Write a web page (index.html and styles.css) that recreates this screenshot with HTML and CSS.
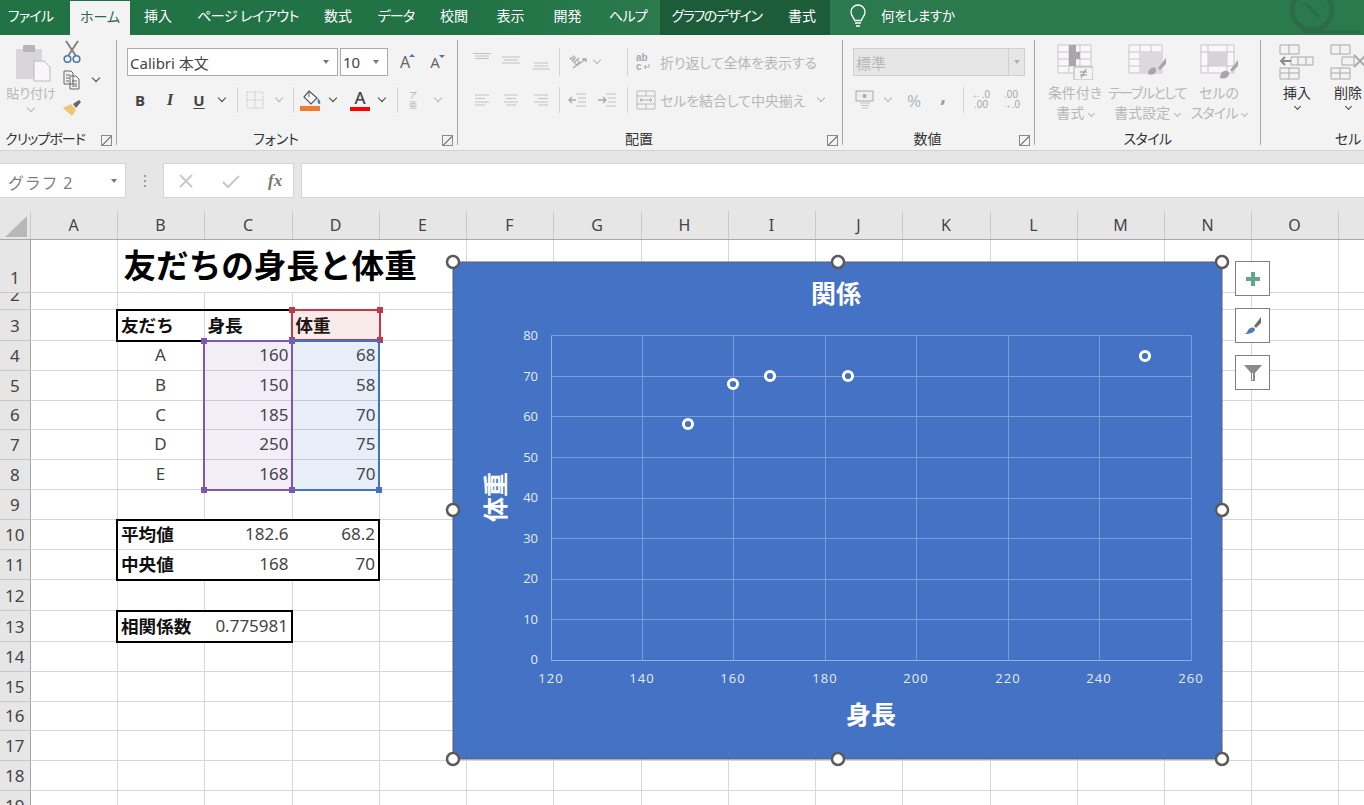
FILE: index.html
```html
<!DOCTYPE html>
<html lang="ja">
<head>
<meta charset="utf-8">
<title>友だちの身長と体重</title>
<link rel="stylesheet" href="styles.css">
</head>
<body>
<nav class="tabs">
  <div class="tab t-file">ファイル</div>
  <div class="tab t-home">ホーム</div>
  <div class="tab t-ins">挿入</div>
  <div class="tab t-page">ページ レイアウト</div>
  <div class="tab t-ins">数式</div>
  <div class="tab t-data">データ</div>
  <div class="tab t-ins">校閲</div>
  <div class="tab t-view">表示</div>
  <div class="tab t-view">開発</div>
  <div class="tab t-help">ヘルプ</div>
  <div class="ctx">
    <div class="tab t-design">グラフのデザイン</div>
    <div class="tab t-fmt">書式</div>
  </div>
  <svg class="bulb" width="18" height="24" viewBox="0 0 18 24"><path d="M5.5 16.5C5.2 13.5 2 12 2 8a7 7 0 0 1 14 0c0 4-3.200 5.500-3.500 8.500z" fill="none" stroke="#fff" stroke-width="1.300"/><path d="M6 19h6M7 22h4" stroke="#fff" stroke-width="1.500"/></svg>
  <div class="tell">何をしますか</div>
  <svg class="mark" width="110" height="35" viewBox="0 0 110 35"><circle cx="62" cy="10" r="20" fill="none" stroke="#2c6a48" stroke-width="5"/><path d="M55 3l14 14M52 32h58" stroke="#2c6a48" stroke-width="3" fill="none"/></svg>
</nav>

<section class="ribbon">
  <div class="group g-clip">
    <div class="body clip-body">
      <div class="paste">
        <svg width="36" height="38" viewBox="0 0 36 38"><rect x="1" y="5" width="26" height="30" fill="#d9d5d9"/><rect x="8" y="1" width="12" height="7" rx="1" fill="#b8b4b8"/><path d="M19 17h10l6 6v14H19z" fill="#f8f6f8" stroke="#bdbabd"/></svg>
        <div class="dis big-t">貼り付け</div>
        <span class="chev dis"></span>
      </div>
      <div class="clip-tools">
        <svg width="18" height="24" viewBox="0 0 18 24"><path d="M3 1l10 15M15 1L5 16" stroke="#7d7d7d" stroke-width="1.800" fill="none"/><circle cx="4.500" cy="19" r="3.300" fill="none" stroke="#4a79ad" stroke-width="1.600"/><circle cx="13.500" cy="19" r="3.300" fill="none" stroke="#4a79ad" stroke-width="1.600"/></svg>
        <span></span>
        <svg width="18" height="20" viewBox="0 0 18 20"><path d="M1 1h7l2 2v11H1zM7 6h6l3 3v10H7z" fill="#f3f3f3" stroke="#666"/><path d="M3 5h4M3 8h3M3 11h3M9 11h5M9 14h5M9 16h5" stroke="#666"/></svg>
        <span class="chev dark"></span>
        <svg width="20" height="18" viewBox="0 0 20 18"><path d="M1 9l8-4 5 6-4 6z" fill="#f0c671"/><path d="M11 5l6-4 2 2-5 6z" fill="#666"/></svg>
        <span></span>
      </div>
    </div>
    <div class="foot"><span class="lbl lbl-clip">クリップボード</span><span class="launch"></span></div>
  </div>

  <div class="group g-font">
    <div class="body rows">
      <div class="row1">
        <div class="combo c-font"><span class="combo-t">Calibri 本文</span><span class="tri"></span></div>
        <div class="combo c-size"><span class="combo-t">10</span><span class="tri"></span></div>
        <div class="grow-a">A<sup class="up"></sup></div>
        <div class="grow-a small-a">A<sup class="dn"></sup></div>
      </div>
      <div class="row2 font-row">
        <b class="fb">B</b>
        <b class="fb fi">I</b>
        <b class="fb fu">U</b>
        <span class="chev dark"></span>
        <span class="sep"></span>
        <svg width="18" height="18" viewBox="0 0 18 18"><path d="M1 1h16v16H1zM9 1v16M1 9h16" fill="none" stroke="#c4c4c4" stroke-dasharray="1.500 1"/></svg>
        <span class="chev dis"></span>
        <span class="sep"></span>
        <svg width="22" height="22" viewBox="0 0 22 22"><path d="M9 2l8 7-6 6-7-7z" fill="#fff" stroke="#555" stroke-width="1.200"/><path d="M9 2v6" stroke="#555"/><path d="M18 9c2 3 3 4 2 6-2 0-3-2-2-6z" fill="#3f78c0"/><rect x="0" y="17" width="20" height="5" fill="#ed7d31"/></svg>
        <span class="chev dark"></span>
        <i></i>
        <span class="color-a">A</span>
        <span class="chev dark"></span>
        <i></i>
        <span class="sep"></span>
        <span class="dis zh">ア<br>亜</span>
        <span class="chev dis"></span>
      </div>
    </div>
    <div class="foot"><span class="lbl">フォント</span><span class="launch"></span></div>
  </div>

  <div class="group g-align">
    <div class="body rows">
      <div class="row2 align-a">
        <svg width="18" height="28" viewBox="0 0 18 28"><path d="M0 5.500h18M2 8h14M2 10.500h14" stroke="#c2c2c2"/></svg>
        <svg width="18" height="28" viewBox="0 0 18 28"><path d="M0 9h18M2 12h14M0 15h18" stroke="#c2c2c2"/></svg>
        <svg width="18" height="28" viewBox="0 0 18 28"><path d="M2 15h14M2 18h14M0 21h18" stroke="#c2c2c2"/></svg>
        <span class="sep tall"></span>
        <i></i>
        <svg class="orient" width="22" height="20" viewBox="0 0 22 20"><text x="1" y="12" class="ab-t" transform="rotate(45 8 9)">ab</text><path d="M5 16L18 7m-4 0h4v3" fill="none" stroke="#aaa" stroke-width="1.400"/></svg>
        <span class="chev dis"></span>
        <i></i>
        <span class="sep tall"></span>
        <svg width="16" height="18" viewBox="0 0 16 18"><text x="1" y="8" class="ab-t">ab</text><text x="1" y="17" class="ab-t">c</text><path d="M14 11v3H9m2-2l-2 2 2 2" fill="none" stroke="#aaa"/></svg>
        <i></i>
        <span class="dis rib-t">折り返して全体を表示する</span>
      </div>
      <div class="row2 align-b">
        <svg width="14" height="12" viewBox="0 0 14 12"><path d="M0 1h14M0 4.500h10M0 8h14M0 11h10" stroke="#c2c2c2"/></svg>
        <svg width="14" height="12" viewBox="0 0 14 12"><path d="M0 1h14M2 4.500h10M0 8h14M2 11h10" stroke="#c2c2c2"/></svg>
        <svg width="14" height="12" viewBox="0 0 14 12"><path d="M0 1h14M4 4.500h10M0 8h14M4 11h10" stroke="#c2c2c2"/></svg>
        <span class="sep"></span>
        <svg width="18" height="14" viewBox="0 0 18 14"><path d="M8 1h10M10 5h8M10 9h8M8 13h10" stroke="#c2c2c2"/><path d="M8 7H1m3-3L1 7l3 3" fill="none" stroke="#aaa" stroke-width="1.400"/></svg>
        <svg width="18" height="14" viewBox="0 0 18 14"><path d="M8 1h10M10 5h8M10 9h8M8 13h10" stroke="#c2c2c2"/><path d="M0 7h7M5 4l3 3-3 3" fill="none" stroke="#aaa" stroke-width="1.400"/></svg>
        <i></i>
        <span class="sep"></span>
        <i></i>
        <svg width="20" height="20" viewBox="0 0 20 20"><path d="M1 1h18v18H1zM1 6h18M1 14h18M10 1v5M10 14v5" fill="none" stroke="#bbb"/><path d="M4 10h12M6 8l-2 2 2 2M14 8l2 2-2 2" fill="none" stroke="#aaa"/></svg>
        <i></i>
        <span class="dis rib-t">セルを結合して中央揃え</span>
        <span class="chev dis"></span>
      </div>
    </div>
    <div class="foot"><span class="lbl">配置</span><span class="launch"></span></div>
  </div>

  <div class="group g-num">
    <div class="body rows">
      <div class="combo c-num"><span class="combo-t dis">標準</span><span class="num-drop"><span class="tri"></span></span></div>
      <div class="row2 num-row">
        <svg width="20" height="20" viewBox="0 0 20 20"><rect x="1" y="1" width="17" height="10" fill="#eee" stroke="#aaa"/><circle cx="9.500" cy="6" r="2" fill="#aaa"/><path d="M5 13h10M6 15.500h8M7 18h6" stroke="#c4c4c4"/></svg>
        <span class="chev dis"></span>
        <span class="dis pct">%</span>
        <b class="dis comma">,</b>
        <i></i>
        <span class="sep"></span>
        <span class="dec"><span>←.0</span><span>.00</span></span>
        <span class="dec"><span>.00</span><span>→.0</span></span>
      </div>
    </div>
    <div class="foot"><span class="lbl">数値</span><span class="launch"></span></div>
  </div>

  <div class="group g-style">
    <div class="body styles">
      <div class="big">
        <svg width="36" height="36" viewBox="0 0 36 36"><path d="M1 1h33v28H1zM1 8h33M1 15h33M1 22h33M12 1v28M23 1v28" fill="#f8f8f8" stroke="#c9c5c9"/><path d="M12 1h7v7h4v7h-4v7h-7z" fill="#a9a6a9"/><rect x="17" y="23" width="19" height="13" fill="#f3f3f3" stroke="#b5b2b5"/><path d="M23 28h7M23 31h7M29 25l-5 9" stroke="#8c8c8c"/></svg>
        <div class="dis big-l">条件付き<br>書式 <span class="chev dis"></span></div>
      </div>
      <div class="big">
        <svg width="38" height="36" viewBox="0 0 38 36"><path d="M1 1h33v28H1zM1 8h33M1 15h33M1 22h33M12 1v28M23 1v28" fill="#f8f8f8" stroke="#c9c5c9"/><rect x="12" y="8" width="22" height="21" fill="#dcd9dc"/><path d="M20 30c0-6 6-8 8-5 1 4-3 7-8 5z" fill="#a9a6a9"/><path d="M30 24l8-10v6l-6 6z" fill="#a9a6a9"/></svg>
        <div class="dis big-l"><span class="tight">テーブルとして</span><br>書式設定 <span class="chev dis"></span></div>
      </div>
      <div class="big">
        <svg width="38" height="36" viewBox="0 0 38 36"><path d="M1 1h33v28H1zM8 1v28M27 1v28M1 8h33M1 22h33" fill="#f8f8f8" stroke="#c9c5c9"/><rect x="8" y="8" width="19" height="14" fill="#d6d3d6"/><path d="M20 34c0-7 6-9 9-6 1 4-3 8-9 6z" fill="#a9a6a9"/><path d="M30 26l8-10v6l-6 6z" fill="#a9a6a9"/></svg>
        <div class="dis big-l">セルの<br><span class="tight2">スタイル</span> <span class="chev dis"></span></div>
      </div>
    </div>
    <div class="foot foot-plain"><span class="lbl lbl-kana">スタイル</span></div>
  </div>

  <div class="group g-cell">
    <div class="body cells">
      <div class="big">
        <svg width="36" height="36" viewBox="0 0 36 36"><path d="M1 1h19v9H1zM10 1v9M1 24h19v11H1zM1 29h19M10 24v11M12 13h22v8H12zM19 13v8M27 13v8" fill="#f3f3f3" stroke="#aaa8aa"/><path d="M12 17H2m4-4l-4 4 4 4" fill="none" stroke="#8a8a8a" stroke-width="2"/></svg>
        <div class="cell-l">挿入</div>
        <span class="chev dark"></span>
      </div>
      <div class="big">
        <svg width="36" height="36" viewBox="0 0 36 36"><path d="M1 1h19v9H1zM10 1v9M1 24h19v11H1zM1 29h19M10 24v11M12 13h12v8H12z" fill="#f3f3f3" stroke="#aaa8aa"/><path d="M24 11l12 12M36 11L24 23" stroke="#aaa" stroke-width="2"/></svg>
        <div class="cell-l">削除</div>
        <span class="chev dark"></span>
      </div>
    </div>
    <div class="foot foot-plain foot-cell"><span class="lbl">セル</span></div>
  </div>
</section>

<section class="fbar">
  <div class="namebox"><span class="name">グラフ 2</span><span class="tri"></span></div>
  <div class="dots"><span></span><span></span><span></span></div>
  <div class="fn">
    <svg width="16" height="16" viewBox="0 0 16 16"><path d="M2 2l12 12M14 2L2 14" stroke="#c8c8c8" stroke-width="1.800"/></svg>
    <svg width="18" height="16" viewBox="0 0 18 16"><path d="M1 9l5 5L17 3" fill="none" stroke="#c8c8c8" stroke-width="2"/></svg>
    <span class="fx">fx</span>
  </div>
  <div class="formula"></div>
</section>

<main class="sheet">
  <table class="grid">
    <colgroup><col class="c30"><col class="c87"><col class="c87"><col class="c88"><col class="c87"><col class="c87"><col class="c87"><col class="c88"><col class="c87"><col class="c87"><col class="c87"><col class="c88"><col class="c87"><col class="c87"><col class="c87"><col class="c87"><col class="c87"></colgroup>
    <thead>
      <tr class="hdr"><th class="corner"><svg width="22" height="21" viewBox="0 0 22 21"><path d="M22 0v21H0z" fill="#b8b8b8"/></svg></th><th>A</th><th>B</th><th>C</th><th>D</th><th>E</th><th>F</th><th>G</th><th>H</th><th>I</th><th>J</th><th>K</th><th>L</th><th>M</th><th>N</th><th>O</th><th></th></tr>
    </thead>
    <tbody>
      <tr class="h53"><th>1</th><td></td><td colspan="4" class="title">友だちの身長と体重</td><td></td><td></td><td></td><td></td><td></td><td></td><td></td><td></td><td></td><td></td></tr>
      <tr class="h17"><th><div class="clip">2</div></th><td></td><td></td><td></td><td></td><td></td><td></td><td></td><td></td><td></td><td></td><td></td><td></td><td></td><td></td><td></td><td></td></tr>
      <tr class="h31"><th>3</th><td></td><td class="hd bt bb bl">友だち</td><td class="hd bt">身長</td><td class="hd">体重</td><td></td><td></td><td></td><td></td><td></td><td></td><td></td><td></td><td></td><td></td><td></td><td></td></tr>
      <tr class="h30"><th>4</th><td></td><td class="ctr">A</td><td class="num">160</td><td class="num">68</td><td></td><td></td><td></td><td></td><td></td><td></td><td></td><td></td><td></td><td></td><td></td><td></td></tr>
      <tr class="h30"><th>5</th><td></td><td class="ctr">B</td><td class="num">150</td><td class="num">58</td><td></td><td></td><td></td><td></td><td></td><td></td><td></td><td></td><td></td><td></td><td></td><td></td></tr>
      <tr class="h29"><th>6</th><td></td><td class="ctr">C</td><td class="num">185</td><td class="num">70</td><td></td><td></td><td></td><td></td><td></td><td></td><td></td><td></td><td></td><td></td><td></td><td></td></tr>
      <tr class="h30"><th>7</th><td></td><td class="ctr">D</td><td class="num">250</td><td class="num">75</td><td></td><td></td><td></td><td></td><td></td><td></td><td></td><td></td><td></td><td></td><td></td><td></td></tr>
      <tr class="h30"><th>8</th><td></td><td class="ctr">E</td><td class="num">168</td><td class="num">70</td><td></td><td></td><td></td><td></td><td></td><td></td><td></td><td></td><td></td><td></td><td></td><td></td></tr>
      <tr class="h30"><th>9</th><td></td><td></td><td></td><td></td><td></td><td></td><td></td><td></td><td></td><td></td><td></td><td></td><td></td><td></td><td></td><td></td></tr>
      <tr class="h30"><th>10</th><td></td><td class="hd bt bl nr">平均値</td><td class="num bt nr">182.6</td><td class="num bt br">68.2</td><td></td><td></td><td></td><td></td><td></td><td></td><td></td><td></td><td></td><td></td><td></td><td></td></tr>
      <tr class="h30"><th>11</th><td></td><td class="hd bb bl nr">中央値</td><td class="num bb nr">168</td><td class="num bb br">70</td><td></td><td></td><td></td><td></td><td></td><td></td><td></td><td></td><td></td><td></td><td></td><td></td></tr>
      <tr class="h31"><th>12</th><td></td><td></td><td></td><td></td><td></td><td></td><td></td><td></td><td></td><td></td><td></td><td></td><td></td><td></td><td></td><td></td></tr>
      <tr class="h31"><th>13</th><td></td><td class="hd bt bb bl nr">相関係数</td><td class="num bt bb br">0.775981</td><td></td><td></td><td></td><td></td><td></td><td></td><td></td><td></td><td></td><td></td><td></td><td></td><td></td></tr>
      <tr class="h30"><th>14</th><td></td><td></td><td></td><td></td><td></td><td></td><td></td><td></td><td></td><td></td><td></td><td></td><td></td><td></td><td></td><td></td></tr>
      <tr class="h30"><th>15</th><td></td><td></td><td></td><td></td><td></td><td></td><td></td><td></td><td></td><td></td><td></td><td></td><td></td><td></td><td></td><td></td></tr>
      <tr class="h29"><th>16</th><td></td><td></td><td></td><td></td><td></td><td></td><td></td><td></td><td></td><td></td><td></td><td></td><td></td><td></td><td></td><td></td></tr>
      <tr class="h30"><th>17</th><td></td><td></td><td></td><td></td><td></td><td></td><td></td><td></td><td></td><td></td><td></td><td></td><td></td><td></td><td></td><td></td></tr>
      <tr class="h30"><th>18</th><td></td><td></td><td></td><td></td><td></td><td></td><td></td><td></td><td></td><td></td><td></td><td></td><td></td><td></td><td></td><td></td></tr>
      <tr class="h30"><th>19</th><td></td><td></td><td></td><td></td><td></td><td></td><td></td><td></td><td></td><td></td><td></td><td></td><td></td><td></td><td></td><td></td></tr>
    </tbody>
  </table>

  <div class="range r-red"><s class="tl"></s><s class="tr"></s><s class="bl2"></s><s class="br2"></s></div>
  <div class="range r-pur"><s class="tl"></s><s class="tr"></s><s class="bl2"></s><s class="br2"></s></div>
  <div class="range r-blu"><s class="br2"></s></div>

  <figure class="chart">
    <svg class="chart-svg" width="769" height="497" viewBox="453 262 769 497">
      <rect x="453" y="262" width="769" height="497" fill="#4472c4" stroke="#5a5f6b"/>
      <g class="gl" transform="translate(.5 .5)">
        <path d="M551 335h640M551 376h640M551 416h640M551 457h640M551 498h640M551 538h640M551 579h640M551 619h640"/>
        <path d="M642 335v325M733 335v325M825 335v325M916 335v325M1008 335v325M1099 335v325M1191 335v325"/>
        <path class="axis" d="M551 335v325h640"/>
      </g>
      <g class="ylab">
        <text x="538" y="340">80</text><text x="538" y="381">70</text><text x="538" y="421">60</text><text x="538" y="462">50</text><text x="538" y="502">40</text><text x="538" y="543">30</text><text x="538" y="583">20</text><text x="538" y="624">10</text><text x="538" y="664">0</text>
      </g>
      <g class="xlab">
        <text x="551" y="683">120</text><text x="642" y="683">140</text><text x="733" y="683">160</text><text x="825" y="683">180</text><text x="916" y="683">200</text><text x="1008" y="683">220</text><text x="1099" y="683">240</text><text x="1191" y="683">260</text>
      </g>
      <text class="ct" x="836" y="303">関係</text>
      <text class="ct" x="871" y="724">身長</text>
      <text class="ct" transform="translate(505 497) rotate(-90)">体重</text>
      <g class="pts">
        <circle cx="733" cy="384" r="4.600"/><circle cx="688" cy="424" r="4.600"/><circle cx="848" cy="376" r="4.600"/><circle cx="1145" cy="356" r="4.600"/><circle cx="770" cy="376" r="4.600"/>
      </g>
      <g class="hnd">
        <circle cx="453" cy="262" r="6"/><circle cx="838" cy="262" r="6"/><circle cx="1222" cy="262" r="6"/><circle cx="453" cy="510" r="6"/><circle cx="1222" cy="510" r="6"/><circle cx="453" cy="759" r="6"/><circle cx="838" cy="759" r="6"/><circle cx="1222" cy="759" r="6"/>
      </g>
    </svg>
  </figure>

  <div class="side">
    <div class="side-b"><svg width="16" height="16" viewBox="0 0 16 16"><path d="M6 1h4v5h5v4h-5v5H6v-5H1V6h5z" fill="#66a78a"/></svg></div>
    <div class="side-b"><svg width="20" height="20" viewBox="0 0 20 20"><path d="M11 10l7-9v6l-5 5z" fill="#6e6e6e"/><path d="M1 18c3 0 3-3 5-5 2-2 5-2 6 0 0 3-4 5-11 5z" fill="#4a7fb5"/></svg></div>
    <div class="side-b"><svg width="20" height="18" viewBox="0 0 20 18"><path d="M1 1h18l-7 8v8H8V9z" fill="#8a8a8a"/><path d="M9.500 9v7" stroke="#fff"/></svg></div>
  </div>
</main>
</body>
</html>
```
FILE: styles.css
```css
* { box-sizing: border-box; }
html, body { margin: 0; padding: 0; width: 1364px; height: 805px; overflow: hidden; }
body { font-family: "Noto Sans", "Noto Sans CJK JP", sans-serif; background: #fff; color: #333; font-feature-settings: "palt"; }

/* title bar tabs */
.tabs { position: relative; display: flex; align-items: stretch; height: 35px; background: linear-gradient(90deg, #217346 35%, #2a7a4e 48%); color: #fff; font-size: 14px; overflow: hidden; }
.tab { display: flex; align-items: center; justify-content: center; flex: none; padding-bottom: 5px; white-space: nowrap; }
.t-file { width: 70px; padding-right: 9px; letter-spacing: -.8px; }
.t-home { width: 60px; background: #f3f3f3; color: #2b6a48; margin-top: 1px; }
.t-ins { width: 56px; }
.t-page { width: 124px; letter-spacing: -.5px; }
.t-data { width: 60px; letter-spacing: -.8px; }
.t-view { width: 57px; }
.t-help { width: 64px; letter-spacing: -.7px; }
.ctx { display: flex; width: 170px; background: #1c5c39; }
.t-design { width: 113px; letter-spacing: -1.400px; }
.t-fmt { width: 58px; }
.bulb { margin: 4px 0 0 19px; flex: none; }
.tell { margin-left: 14px; align-self: center; padding-bottom: 5px; font-size: 13.500px; letter-spacing: -.2px; }
.mark { position: absolute; left: 1250px; top: 0; }

/* ribbon */
.ribbon { display: flex; height: 116px; padding-top: 5px; background: #f3f3f3; border-bottom: 1px solid #d2d2d2; font-size: 14px; }
.group { flex: none; height: 105px; display: flex; flex-direction: column; border-right: 1px solid #a9a9a9; }
.g-clip { width: 117px; }
.g-font { width: 341px; }
.g-align { width: 385px; }
.g-num { width: 192px; }
.g-style { width: 226px; }
.g-cell { flex: 1; border-right: 0; }
.body { height: 85px; }
.foot { display: flex; height: 20px; align-items: center; line-height: 28px; font-size: 14px; color: #333; }
.lbl { flex: 1; text-align: center; white-space: nowrap; padding-top: 8px; }
.lbl-clip { letter-spacing: -.9px; padding-right: 4px; }
.lbl-kana { letter-spacing: -.5px; }
.foot-cell { padding-left: 62px; }
.launch { position: relative; width: 22px; height: 9px; margin-top: 9px; }
.launch::before { content: ""; position: absolute; left: 7px; top: 0; width: 9px; height: 9px; border: 1px solid #8a8a8a; background: linear-gradient(135deg, transparent 47%, #8a8a8a 47% 57%, transparent 57%); }
.foot-plain { padding-right: 0; }

.dis { color: #b7b7b7; }
.dark { color: #444; }
.chev { display: inline-block; width: 6px; height: 6px; border-right: 1.400px solid currentColor; border-bottom: 1.400px solid currentColor; transform: translateY(-2px) rotate(45deg); }
.tri { display: inline-block; width: 0; height: 0; border: 3.500px solid transparent; border-top: 4px solid #777; border-bottom: 0; }
.sep { display: block; width: 1px; height: 26px; background: #d4d4d4; }
.sep.tall { height: 28px; }

/* clipboard */
.clip-body { display: flex; }
.paste { width: 62px; display: flex; flex-direction: column; align-items: center; padding-top: 4px; }
.paste svg { margin-left: 4px; }
.big-t { font-size: 13px; line-height: 18px; margin-top: 2px; white-space: nowrap; }
.paste .chev { margin-top: 5px; }
.clip-tools { display: grid; grid-template-columns: 20px 28px; grid-auto-rows: 24px; row-gap: 4px; justify-items: center; align-items: center; }

/* rows */
.rows { padding: 8px 0 0 10px; display: flex; flex-direction: column; gap: 11px; }
.row1 { display: flex; align-items: center; height: 28px; }
.combo { display: flex; align-items: center; justify-content: space-between; height: 28px; background: #fff; border: 1px solid #ababab; padding: 0 8px 0 2px; font-size: 15px; color: #444; }
.combo-t { white-space: nowrap; }
.c-font { width: 211px; margin-right: 2px; }
.c-size { width: 48px; }
.grow-a { position: relative; width: 30px; text-align: center; font-size: 16px; color: #666; margin-left: 2px; }
.small-a { margin-left: 0; font-size: 15px; }
.grow-a sup { position: absolute; left: 19px; top: 3px; width: 0; height: 0; border: 3px solid transparent; }
.up { border-bottom: 3px solid #4a79ad !important; border-top: 0 !important; }
.dn { border-top: 3px solid #4a79ad !important; border-bottom: 0 !important; }

.row2 { display: grid; height: 24px; justify-items: center; align-items: center; }
.row2 i { display: block; }
.font-row { grid-template-columns: 26px 34px 24px 22px 8px 28px 20px 8px 28px 16px 4px 30px 14px 4px 8px 24px 26px; }
.fb { font-size: 15px; color: #444; font-family: "Open Sans", sans-serif; }
.fi { font-style: italic; font-family: "Liberation Serif", serif; font-size: 17px; }
.fu { text-decoration: underline; text-underline-offset: 2px; }
.color-a { font-size: 17px; line-height: 18px; color: #444; border-bottom: 4px solid #f00; width: 20px; text-align: center; font-weight: 500; }
.zh { font-size: 8.500px; line-height: 10px; text-align: center; }

.align-a { height: 28px; grid-template-columns: 28px 30px 30px 6px 4px 26px 10px 22px 6px 26px 4px auto; justify-content: start; }
.align-b { grid-template-columns: 28px 30px 30px 6px 30px 30px 2px 6px 4px 24px 2px 146px 30px; justify-content: start; }
.ab-t { font: 700 10px "Liberation Sans", sans-serif; fill: #aaa; }
.orient { overflow: visible; }
.rib-t { font-size: 14px; white-space: nowrap; justify-self: start; letter-spacing: -.1px; }

.c-num { width: 172px; margin-right: 0; background: #e6e6e6; border-color: #cfcfcf; padding: 0 0 0 2px; height: 28px; flex: none; }
.num-drop { display: flex; align-items: center; justify-content: center; width: 16px; height: 100%; border-left: 1px solid #cfcfcf; }
.num-drop .tri { border-top-color: #b0b0b0; }
.num-row { grid-template-columns: 24px 22px 30px 28px 3px 6px 30px 30px; justify-content: start; }
.pct { font-size: 17px; }
.comma { font-size: 20px; line-height: 10px; transform: translateY(-5px); color: #999; }
.dec { display: flex; flex-direction: column; font: 10px/10px "Liberation Sans", sans-serif; color: #a5a5a5; text-align: center; white-space: nowrap; }

/* styles and cells */
.styles { display: grid; grid-template-columns: repeat(3, 72px); padding: 4px 0 0 4px; }
.big { display: flex; flex-direction: column; align-items: center; }
.big svg { flex: none; height: 36px; }
.big-l { margin-top: 3px; font-size: 14px; line-height: 20px; text-align: center; white-space: nowrap; }
.big-l .chev { width: 5px; height: 5px; margin-left: 1px; }
.tight { letter-spacing: -1.400px; }
.tight2 { letter-spacing: -.8px; }
.cells { display: grid; grid-template-columns: 52px 50px; padding: 4px 0 0 10px; }
.cell-l { margin-top: 3px; font-size: 14px; line-height: 20px; color: #333; }
.cells .chev { margin-top: 3px; width: 5px; height: 5px; }

/* formula bar */
.fbar { display: flex; height: 60px; padding: 12px 0 13px; background: #e6e6e6; }
.namebox { display: flex; align-items: center; justify-content: space-between; width: 126px; background: #fff; border: 1px solid #d4d4d4; border-left: 0; padding: 0 8px; font-size: 17px; color: #7f7f7f; }
.name { font-feature-settings: normal; letter-spacing: .8px; font-size: 16px; white-space: nowrap; padding-top: 3px; }
.dots { display: flex; flex-direction: column; justify-content: center; align-items: center; gap: 3px; width: 37px; }
.dots span { width: 2px; height: 2px; background: #9a9a9a; }
.fn { display: flex; align-items: center; width: 131px; background: #fff; border: 1px solid #d4d4d4; padding-left: 14px; }
.fn svg:nth-child(2) { margin-left: 28px; }
.fx { margin-left: 28px; font: italic 700 17px "Liberation Serif", serif; color: #777; }
.formula { flex: 1; margin-left: 7px; background: #fff; border: 1px solid #d4d4d4; border-right: 0; }

/* sheet */
.sheet { position: relative; height: 594px; overflow: hidden; background: #fff; }
.grid { table-layout: fixed; width: 1425px; border-collapse: collapse; font-size: 17px; color: #444; }
.c30 { width: 30px; }
.c87 { width: 87px; }
.c88 { width: 88px; }
.grid th { padding: 0; background: #e6e6e6; font-weight: 400; color: #444; line-height: 28px; vertical-align: bottom; border: 1px solid #c9c9c9; border-left: 0; }
.grid tbody th { border-right: 1px solid #a8a8a8; }
.grid thead th { border-top: 0; border-bottom: 1px solid #a8a8a8; vertical-align: middle; font-size: 16px; }
.hdr { height: 28px; }
.corner { text-align: right; padding: 0 3px 0 0; }
.corner svg { display: block; margin: 3px 0 0 5px; }
.grid td { padding: 0 3px 1px; line-height: 26px; border: 1px solid #d6d6d6; white-space: nowrap; }
.h53 { height: 53px; }
.h31 { height: 31px; }
.h30 { height: 30px; }
.h29 { height: 29px; }
.h17 { height: 17px; }
.clip { height: 16px; overflow: hidden; display: flex; align-items: flex-end; justify-content: center; }
.grid .title { padding-left: 6px; font-size: 32.600px; font-weight: 700; color: #000; line-height: 50px; font-feature-settings: normal; border-right-color: #d6d6d6; }
.grid .hd { font-weight: 700; font-size: 17.600px; color: #111; font-feature-settings: normal; }
.ctr { text-align: center; }
.grid .num { text-align: right; padding-right: 3px; }
.grid .bt { border-top: 2px solid #000; }
.grid .bb { border-bottom: 2px solid #000; }
.grid .bl { border-left: 2px solid #000; }
.grid .br { border-right: 2px solid #000; }
.grid .nr { border-right-color: transparent; }

.range { position: absolute; border: 2px solid; }
.range s { position: absolute; width: 6px; height: 6px; background: currentColor; }
.r-red { left: 291px; top: 98px; width: 90px; height: 32px; border-color: #c0394b; background: rgba(192, 57, 43, .1); }
.r-pur { left: 203px; top: 129px; width: 90px; height: 151px; border-color: #7f57ae; background: rgba(112, 70, 170, .09); }
.r-blu { left: 291px; top: 129px; width: 89px; height: 151px; border-color: #4472c4; border-left-color: #7f57ae; background: rgba(68, 114, 196, .12); }
.r-red s { color: #c0394b; }
.r-pur s { color: #7f57ae; }
.r-blu s { color: #4472c4; }
.tl { left: -4px; top: -4px; }
.tr { right: -4px; top: -4px; }
.bl2 { left: -4px; bottom: -4px; }
.br2 { right: -4px; bottom: -4px; }

/* chart */
.chart { position: absolute; left: 453px; top: 51px; width: 769px; height: 497px; margin: 0; }
.chart-svg { display: block; overflow: visible; }
.gl path { fill: none; stroke: #7b9ad6; stroke-width: 1; }
.gl .axis { stroke: #96afe0; }
.ylab text, .xlab text { font: 13px "Open Sans", sans-serif; fill: #e4ebf7; }
.ylab text { text-anchor: end; }
.xlab text { text-anchor: middle; letter-spacing: 1px; }
.ct { font: 700 25px "Noto Sans CJK JP", sans-serif; fill: #fff; text-anchor: middle; }
.pts circle { fill: #4472c4; stroke: #fff; stroke-width: 3; }
.hnd circle { fill: #fff; stroke: #5a5a5a; stroke-width: 2.500; }

.side { position: absolute; left: 1235px; top: 50px; display: flex; flex-direction: column; gap: 12px; }
.side-b { display: flex; align-items: center; justify-content: center; width: 35px; height: 35px; background: #fff; border: 1px solid #7f7f7f; }
```
